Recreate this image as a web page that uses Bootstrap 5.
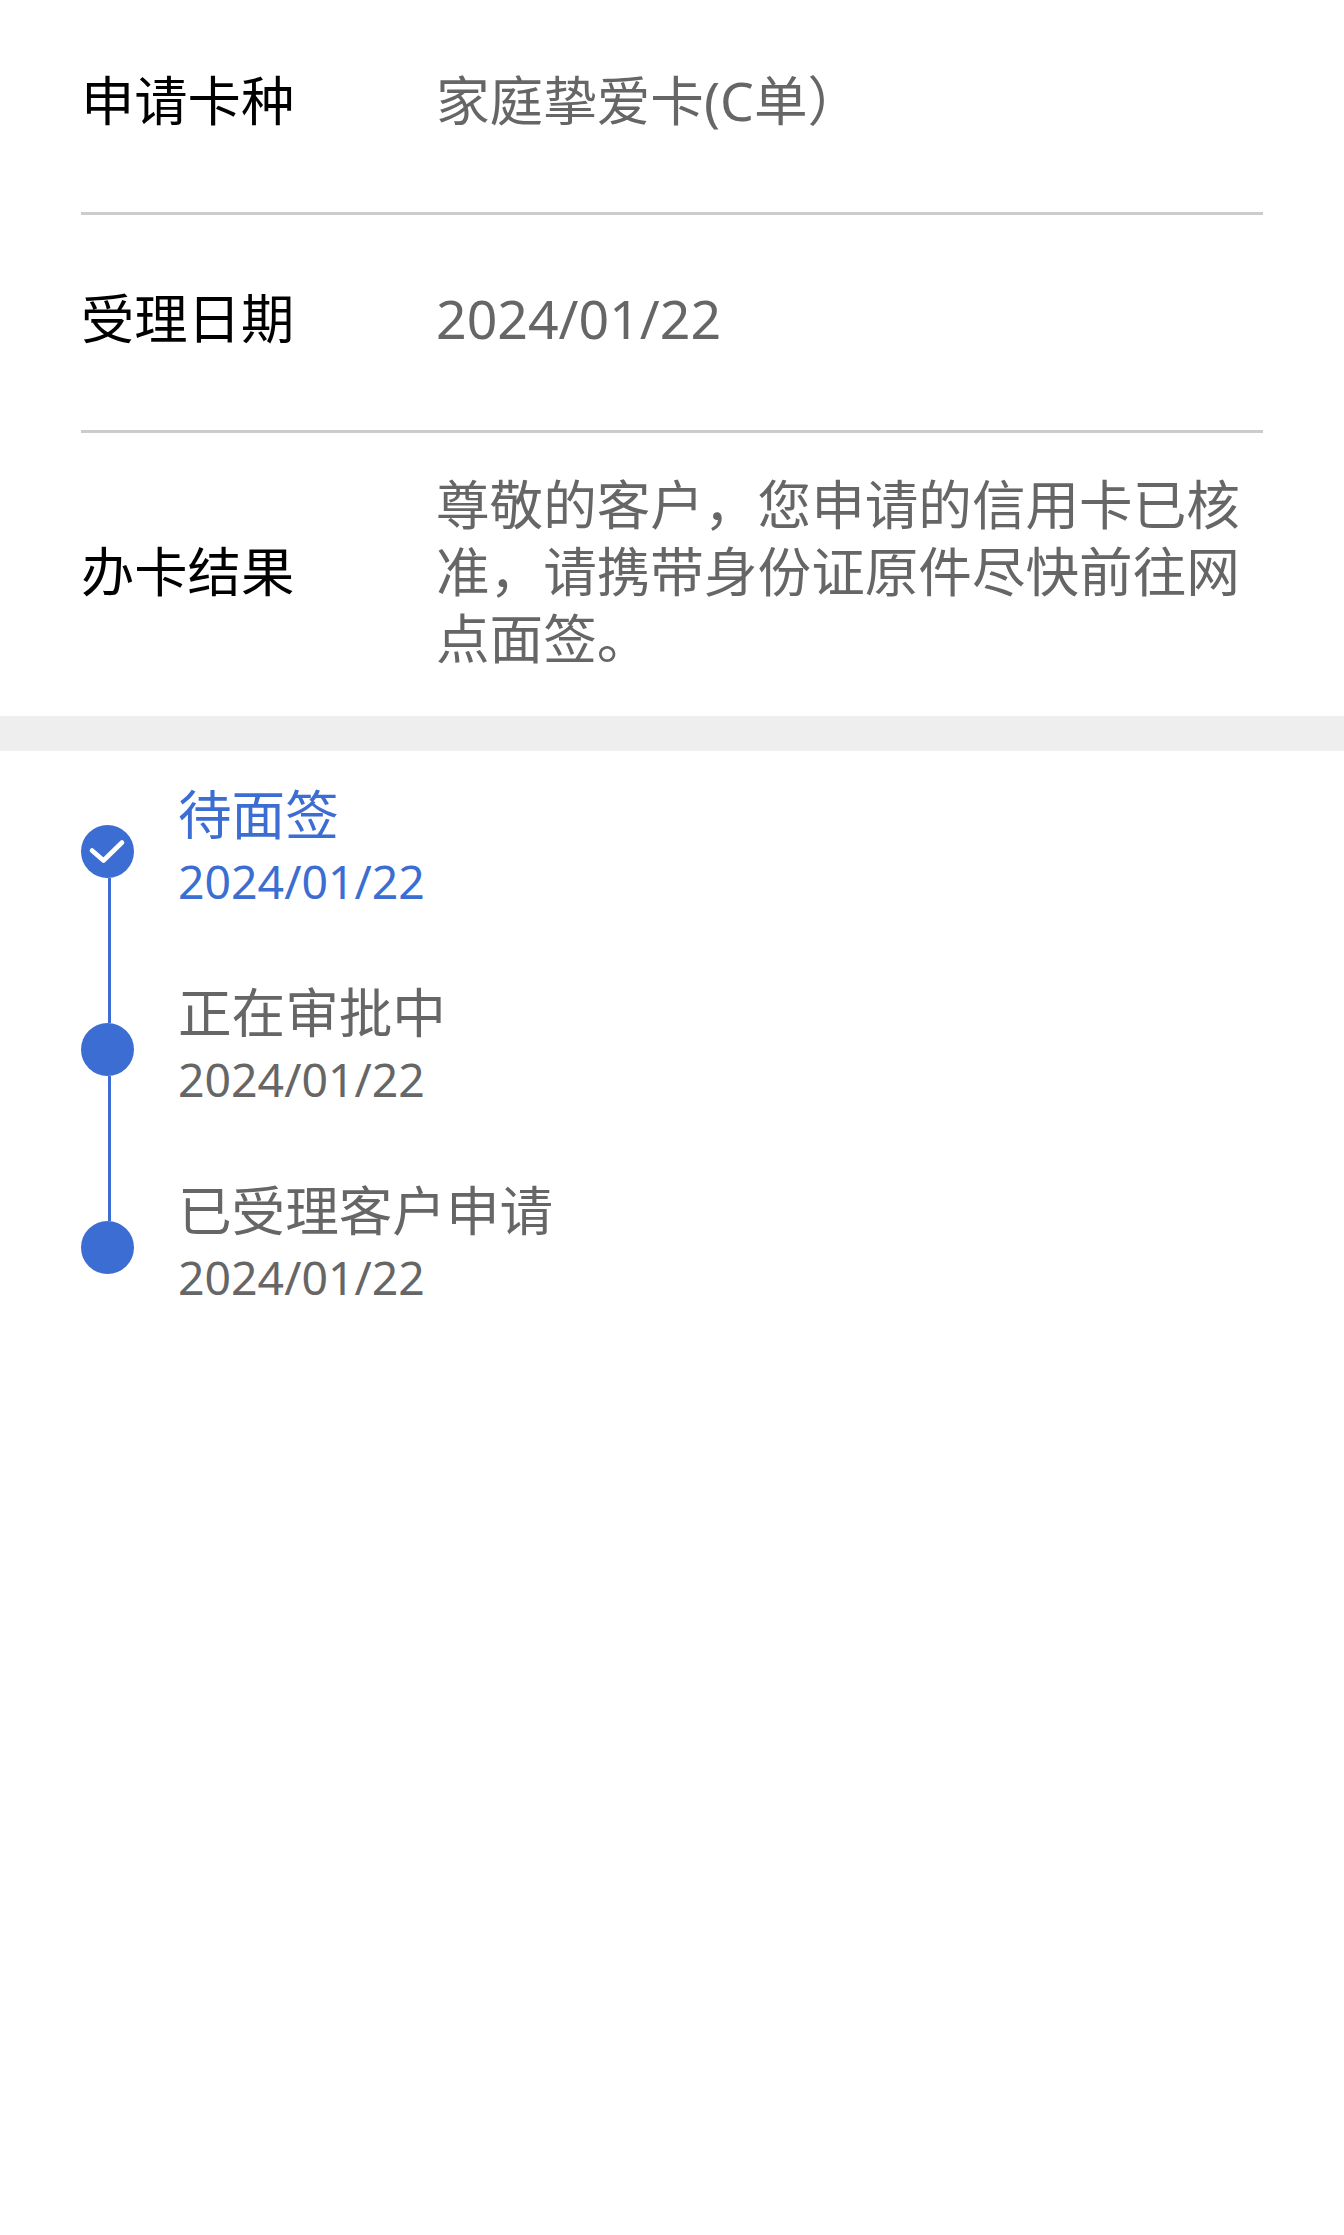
<!DOCTYPE html>
<html lang="zh-CN">
<head>
<meta charset="utf-8">
<title>办卡进度</title>
<link href="https://cdn.jsdelivr.net/npm/bootstrap@5.3.0/dist/css/bootstrap.min.css" rel="stylesheet">
<style>
body{font-family:"Noto Sans","Noto Sans CJK SC",sans-serif;background:#fff;color:#666;min-height:2235px}
.info-wrap{padding:0 81px}
.info-row{border-bottom:3px solid #ccc}
.info-row-a{height:215px;padding-bottom:12px}
.info-row-b{height:218px;padding-bottom:8px}
.info-row-c{height:283px;padding-bottom:6px;border-bottom:0}
.info-label{width:355px;flex:none;font-size:53.3px;line-height:67px;color:#000}
.info-value{font-size:53.6px;line-height:67px;color:#666}
.band{height:35px;background:#eee}
.steps{padding:1px 81px 0}
.step-item{height:198px;column-gap:44px}
.step-dot{width:53px;height:53px;flex:none;border-radius:50%;background:#3c6dd2}
.step-item:not(:last-child) .step-dot::after{content:"";position:absolute;left:27px;top:53px;width:3px;height:145px;background:#3c6dd2}
.step-text{padding-bottom:6px}
.step-title{font-size:53.6px;line-height:67px}
.step-date{font-size:46.4px;line-height:67px}
.step-on{color:#3c6dd2}
</style>
</head>
<body>
<main>
<section class="info-wrap">
<div class="info-row info-row-a d-flex align-items-center"><div class="info-label">申请卡种</div><div class="info-value">家庭挚爱卡(C单）</div></div>
<div class="info-row info-row-b d-flex align-items-center"><div class="info-label">受理日期</div><div class="info-value">2024/01/22</div></div>
<div class="info-row info-row-c d-flex align-items-center"><div class="info-label">办卡结果</div><div class="info-value">尊敬的客户，您申请的信用卡已核准，请携带身份证原件尽快前往网点面签。</div></div>
</section>
<div class="band"></div>
<section class="steps">
<div class="step-item d-flex align-items-center step-on">
<div class="step-dot position-relative"><svg class="d-block" width="53" height="53" viewBox="0 0 53 53" fill="none"><path d="M11 25.5 L22.5 35.5 L41 17.5" stroke="#fff" stroke-width="4.6" stroke-linecap="round" stroke-linejoin="round"/></svg></div>
<div class="step-text"><div class="step-title">待面签</div><div class="step-date">2024/01/22</div></div>
</div>
<div class="step-item d-flex align-items-center">
<div class="step-dot position-relative"></div>
<div class="step-text"><div class="step-title">正在审批中</div><div class="step-date">2024/01/22</div></div>
</div>
<div class="step-item d-flex align-items-center">
<div class="step-dot position-relative"></div>
<div class="step-text"><div class="step-title">已受理客户申请</div><div class="step-date">2024/01/22</div></div>
</div>
</section>
</main>
<script src="https://cdn.jsdelivr.net/npm/bootstrap@5.3.0/dist/js/bootstrap.bundle.min.js"></script>
</body>
</html>
